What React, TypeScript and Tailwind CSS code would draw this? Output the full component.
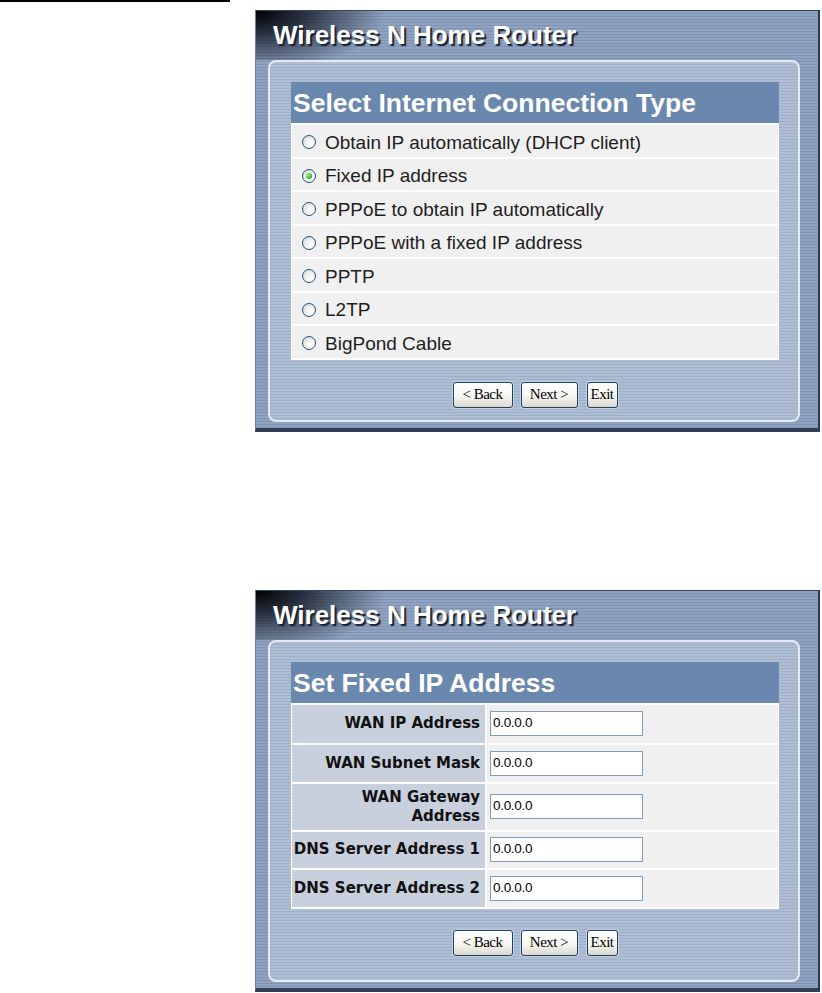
import React from "react";

const options = [
  "Obtain IP automatically (DHCP client)",
  "Fixed IP address",
  "PPPoE to obtain IP automatically",
  "PPPoE with a fixed IP address",
  "PPTP",
  "L2TP",
  "BigPond Cable",
];

type Field = { label: React.ReactNode; h: string };

const fields: Field[] = [
  { label: "WAN IP Address", h: "h-[38px]" },
  { label: "WAN Subnet Mask", h: "h-[37px]" },
  {
    label: (
      <>
        WAN Gateway
        <br />
        Address
      </>
    ),
    h: "h-[46px]",
  },
  { label: "DNS Server Address 1", h: "h-[36px]" },
  { label: "DNS Server Address 2", h: "h-[37px]" },
];

function Radio({ checked }: { checked?: boolean }) {
  return (
    <span className="w-[14px] h-[14px] shrink-0 rounded-full border border-[#1c5180] bg-[radial-gradient(circle_at_65%_65%,#ffffff_0%,#f2f2ee_40%,#d4d4cc_100%)] flex items-center justify-center">
      {checked && (
        <span className="w-[6px] h-[6px] rounded-full bg-[radial-gradient(circle_at_35%_35%,#a8ee9c_0%,#3cb83c_60%,#1e8a1e_100%)]" />
      )}
    </span>
  );
}

function Buttons() {
  const base =
    "h-[26px] border-[1.5px] border-[#1b416f] rounded-[3px] bg-[linear-gradient(180deg,#ffffff_0%,#f6f6f1_55%,#dcd8cc_100%)] text-black text-[15px] leading-none tracking-[-0.5px] flex items-center justify-center shadow-[0_0_0_1px_rgba(255,255,255,0.35)]";
  return (
    <div className="flex justify-center gap-[8px] font-['Liberation_Serif',serif]">
      <button type="button" className={`${base} w-[60px]`}>
        &lt; Back
      </button>
      <button type="button" className={`${base} w-[57px]`}>
        Next &gt;
      </button>
      <button type="button" className={`${base} w-[31px] ml-[1px]`}>
        Exit
      </button>
    </div>
  );
}

function Panel({
  title,
  children,
  btnTop,
  btnBottom,
}: {
  title: string;
  children: React.ReactNode;
  btnTop: string;
  btnBottom: string;
}) {
  return (
    <div className="ml-[255px] w-[565px] border-t border-t-[#34435c] border-r-2 border-r-[#2b3a53] border-l border-l-[#6c81a2] border-b-4 border-b-[#323f56] bg-[repeating-linear-gradient(180deg,#8fa2bf_0px,#8fa2bf_2px,#7f93b2_2px,#7f93b2_3px)]">
      {/* header */}
      <div className="h-[49px] pl-[17px] pt-[11px] bg-[radial-gradient(ellipse_130px_62px_at_0%_0%,#000000_0%,rgba(10,14,24,0.78)_35%,rgba(20,28,45,0)_100%)]">
        <div className="font-['Liberation_Sans',Arial,sans-serif] font-bold text-[26px] leading-none text-white [text-shadow:2px_2px_1px_#1a2130]">
          Wireless N Home Router
        </div>
      </div>

      {/* inner frame */}
      <div
        className={`ml-[12px] mr-[18px] mb-[6px] border-2 border-[#e4eaf3] rounded-[8px] pt-[20px] pl-[21px] pr-[19px] ${btnBottom} bg-[repeating-linear-gradient(180deg,#afbed3_0px,#afbed3_2px,#9eafc8_2px,#9eafc8_3px)]`}
      >
        <div className="h-[41px] bg-[#6a87ae] pl-[2px] pt-[8px]">
          <div className="font-['Liberation_Sans',Arial,sans-serif] font-bold text-[26.5px] leading-none text-white">
            {title}
          </div>
        </div>
        {children}
        <div className={btnTop}>
          <Buttons />
        </div>
      </div>
    </div>
  );
}

export default function App() {
  return (
    <div className="bg-white min-h-[993px] w-[822px] pb-[2px]">
      <div className="h-[2px] w-[230px] bg-black" />

      <div className="mt-[8px]">
        <Panel title="Select Internet Connection Type" btnTop="pt-[22px]" btnBottom="pb-[12px]">
          <div className="bg-white px-[1px] py-[2px] flex flex-col gap-[2px]">
            {options.map((o, i) => (
              <div key={o} className="h-[31.5px] bg-[#f0f0f0] flex items-center pl-[10px] pt-[3px] gap-[9px]">
                <Radio checked={i === 1} />
                <span className="font-['Liberation_Sans',Arial,sans-serif] text-[19px] leading-none text-[#1e1e1e]">
                  {o}
                </span>
              </div>
            ))}
          </div>
        </Panel>
      </div>

      <div className="mt-[158px]">
        <Panel title="Set Fixed IP Address" btnTop="pt-[21px]" btnBottom="pb-[24px]">
          <div className="bg-white px-[1px] py-[2px] grid grid-cols-[193px_1fr] gap-[2px]">
            {fields.map((f, i) => (
              <React.Fragment key={i}>
                <div
                  className={`${f.h} bg-[#c8d0de] flex items-center justify-end pr-[5px] text-right font-['DejaVu_Sans',Verdana,sans-serif] font-bold text-[15px] leading-[19px] text-[#111]`}
                >
                  <span>{f.label}</span>
                </div>
                <div className={`${f.h} bg-[#f0f0f0] flex items-center pl-[3px]`}>
                  <input
                    type="text"
                    defaultValue="0.0.0.0"
                    className="w-[153px] h-[25px] bg-white border border-[#7f9db9] pl-[2px] pb-[2px] font-['Liberation_Sans',Arial,sans-serif] text-[13.5px] tracking-[-0.3px] text-black outline-none"
                  />
                </div>
              </React.Fragment>
            ))}
          </div>
        </Panel>
      </div>
    </div>
  );
}
